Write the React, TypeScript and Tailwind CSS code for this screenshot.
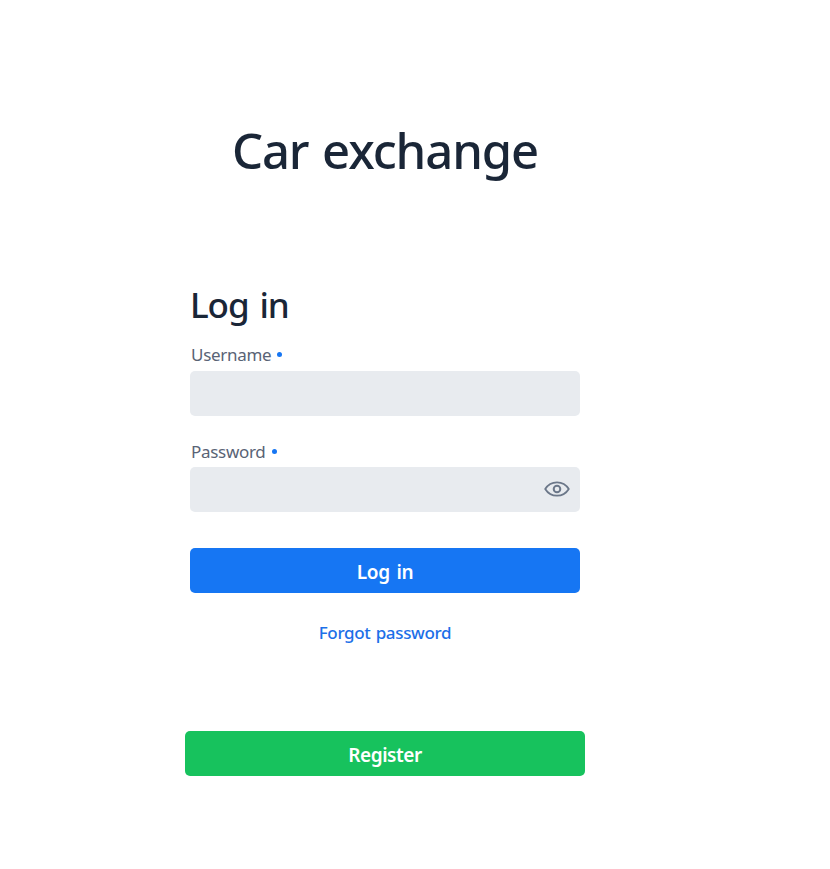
import React from "react";

function EyeIcon() {
  return (
    <svg width="26" height="16" viewBox="0 0 26 16" fill="none" stroke="#6b7789" strokeWidth="1.8">
      <path d="M1.2 8C4 3.5 8 1.3 13 1.3S22 3.5 24.8 8C22 12.5 18 14.7 13 14.7S4 12.5 1.2 8Z" strokeLinejoin="round" />
      <circle cx="13" cy="8" r="3.3" strokeWidth="2" />
    </svg>
  );
}

function Label({ text, htmlFor }: { text: string; htmlFor: string }) {
  return (
    <label htmlFor={htmlFor} className="flex h-6 items-center pl-px text-[17px] leading-6 text-[#596375]">
      <span className="tracking-[-0.3px]">{text}</span>
      <span className="mb-px ml-1.5 size-[5px] rounded-full bg-[#1676f3]" />
    </label>
  );
}

export default function App() {
  return (
    <main className="flex h-[869px] w-[770px] flex-col items-center bg-white font-['Noto_Sans','Open_Sans',sans-serif] text-[#1a2637]">
      <h1 className="mt-[116px] h-[68px] whitespace-nowrap text-[49px] leading-[68px] font-medium tracking-[-1.1px] [word-spacing:2px]">Car exchange</h1>
      <form className="mt-[97px] flex w-[390px] flex-col">
        <h2 className="h-12 whitespace-nowrap text-[35px] leading-12 font-medium tracking-[-1.1px] [word-spacing:3px]">Log in</h2>
        <div className="mt-3.5">
          <Label text="Username" htmlFor="username" />
          <input id="username" className="mt-1 block h-[45px] w-full rounded-[5px] bg-[#e8ebef] px-3 outline-none" />
        </div>
        <div className="mt-6">
          <Label text="Password" htmlFor="password" />
          <div className="mt-[3px] flex h-[45px] items-center rounded-[5px] bg-[#e8ebef] pr-2.5 pb-px">
            <input id="password" type="password" className="h-full min-w-0 flex-1 px-3 outline-none" />
            <EyeIcon />
          </div>
        </div>
        <button type="button" className="mt-9 h-[45px] rounded-[5px] bg-[#1676f3] pt-[3px] text-[19px] font-semibold tracking-[-0.3px] text-white [word-spacing:2px]">
          Log in
        </button>
        <a className="mt-7 text-center text-[17px] leading-6 font-medium tracking-[-0.33px] text-[#1c6fe8] [word-spacing:1px]">
          Forgot password
        </a>
      </form>
      <button type="button" className="mt-[86px] h-[45px] w-[400px] rounded-[5px] bg-[#17c25d] pt-[3px] text-[19px] font-semibold tracking-[-0.45px] text-white">
        Register
      </button>
    </main>
  );
}
